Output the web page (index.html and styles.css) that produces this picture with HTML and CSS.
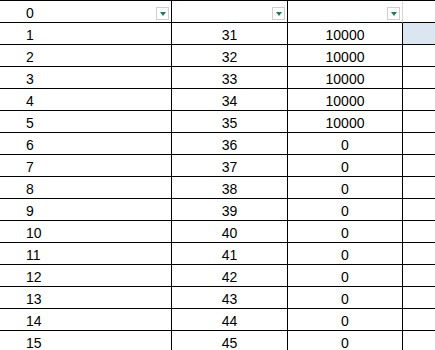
FILE: index.html
```html
<!DOCTYPE html>
<html>
<head>
<meta charset="utf-8">
<link rel="stylesheet" href="styles.css">
</head>
<body>
<div class="sheet">
  <div class="cell h c1"><span class="txt">0</span><span class="dd"><i></i></span></div>
  <div class="cell h c2"><span class="txt"></span><span class="dd"><i></i></span></div>
  <div class="cell h c3"><span class="txt"></span><span class="dd"><i></i></span></div>
  <div class="cell h c4"></div>

  <div class="cell c1">1</div><div class="cell c2">31</div><div class="cell c3">10000</div><div class="cell c4 sel"></div>
  <div class="cell c1">2</div><div class="cell c2">32</div><div class="cell c3">10000</div><div class="cell c4"></div>
  <div class="cell c1">3</div><div class="cell c2">33</div><div class="cell c3">10000</div><div class="cell c4"></div>
  <div class="cell c1">4</div><div class="cell c2">34</div><div class="cell c3">10000</div><div class="cell c4"></div>
  <div class="cell c1">5</div><div class="cell c2">35</div><div class="cell c3">10000</div><div class="cell c4"></div>
  <div class="cell c1">6</div><div class="cell c2">36</div><div class="cell c3">0</div><div class="cell c4"></div>
  <div class="cell c1">7</div><div class="cell c2">37</div><div class="cell c3">0</div><div class="cell c4"></div>
  <div class="cell c1">8</div><div class="cell c2">38</div><div class="cell c3">0</div><div class="cell c4"></div>
  <div class="cell c1">9</div><div class="cell c2">39</div><div class="cell c3">0</div><div class="cell c4"></div>
  <div class="cell c1">10</div><div class="cell c2">40</div><div class="cell c3">0</div><div class="cell c4"></div>
  <div class="cell c1">11</div><div class="cell c2">41</div><div class="cell c3">0</div><div class="cell c4"></div>
  <div class="cell c1">12</div><div class="cell c2">42</div><div class="cell c3">0</div><div class="cell c4"></div>
  <div class="cell c1">13</div><div class="cell c2">43</div><div class="cell c3">0</div><div class="cell c4"></div>
  <div class="cell c1">14</div><div class="cell c2">44</div><div class="cell c3">0</div><div class="cell c4"></div>
  <div class="cell c1">15</div><div class="cell c2">45</div><div class="cell c3">0</div><div class="cell c4"></div>
</div>
</body>
</html>
```
FILE: styles.css
```css
html, body {
  margin: 0;
  padding: 0;
  background: #fff;
  overflow: hidden;
}
.sheet {
  display: grid;
  grid-template-columns: 172px 116px 115px 40px;
  grid-auto-rows: 22px;
  border-top: 1px solid #000;
  font-family: "Liberation Sans", Arial, sans-serif;
  font-size: 14px;
  color: #000;
  width: 443px;
}
.cell {
  box-sizing: border-box;
  border-bottom: 1px solid #000;
  border-right: 1px solid #000;
  display: flex;
  align-items: center;
  line-height: 16px;
  padding-top: 2px;
}
.c1 { padding-left: 26px; }
.c2, .c3 { justify-content: center; }
.c4 { border-right: none; }
.h.c3 { border-right-color: #d4d4d4; }
.h {
  justify-content: space-between;
  align-items: flex-start;
  padding-top: 0;
  padding-right: 2px;
}
.h .txt {
  line-height: 16px;
  margin-top: 4px;
}
.h.c2, .h.c3 { padding-left: 0; }
.dd {
  box-sizing: border-box;
  width: 13px;
  height: 13px;
  margin-top: 6px;
  border: 1px solid #cfcfcf;
  background: #fff;
  display: flex;
  align-items: center;
  justify-content: center;
}
.dd i {
  display: block;
  width: 0;
  height: 0;
  border-left: 3px solid transparent;
  border-right: 3px solid transparent;
  border-top: 4px solid #1f7a5c;
}
.sel { background: #dce6f1; }
```
